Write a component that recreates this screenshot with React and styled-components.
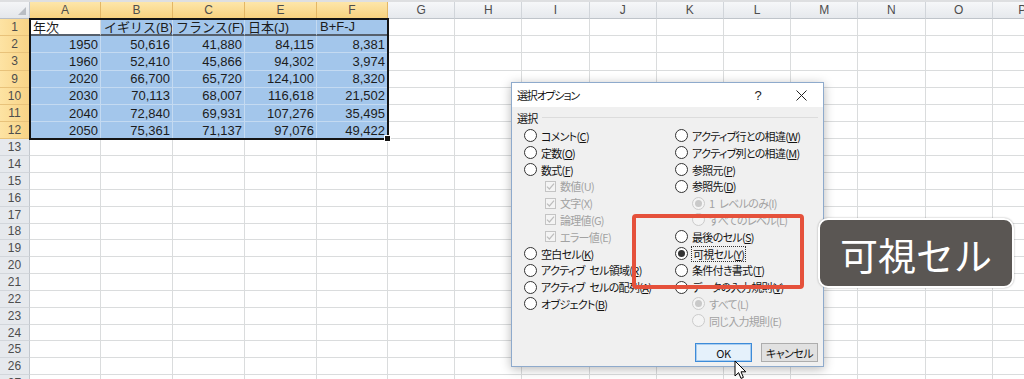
import React from "react";
import styled, { createGlobalStyle } from "styled-components";

const GlobalStyle = createGlobalStyle`
  html, body { margin: 0; padding: 0; background: #fff; }
  body { overflow: hidden; }
`;

const Page = styled.div`
  position: relative;
  width: 1024px;
  height: 379px;
  overflow: hidden;
  background: #fff;
  font-family: "Liberation Sans", "Noto Sans CJK JP", sans-serif;
`;

const Sheet = styled.div`
  position: relative;
  display: grid;
  grid-template-columns: 30px 71px 72px 72px 72px 71px repeat(9, 67.2px) 60px;
  grid-template-rows: 17px repeat(7, 17.2px) repeat(15, 16.85px);
  border-top: 2px solid #dedfe1;
`;

const Corner = styled.div`
  position: relative;
  box-sizing: border-box;
  background: linear-gradient(#f4f5f7, #e4e7eb);
  border-right: 1px solid #c5cad0;
  border-bottom: 1px solid #b9bec5;
  &::after {
    content: "";
    position: absolute;
    right: 3px;
    bottom: 3px;
    border-style: solid;
    border-width: 0 0 8px 8px;
    border-color: transparent transparent #b9bdc3 transparent;
  }
`;

const ColHeader = styled.div`
  box-sizing: border-box;
  display: flex;
  align-items: center;
  justify-content: center;
  font-size: 12px;
  color: #4d4d4d;
  background: ${(p) =>
    p.$active ? "linear-gradient(#fde6aa, #f8d27f)" : "linear-gradient(#f6f7f9, #e6e9ed)"};
  border-right: 1px solid ${(p) => (p.$active ? "#e3b766" : "#d1d5da")};
  border-bottom: 1px solid ${(p) => (p.$active ? "#eaa83a" : "#bfc4ca")};
`;

const RowHeader = styled.div`
  box-sizing: border-box;
  display: flex;
  align-items: center;
  justify-content: center;
  font-size: 12px;
  color: #4d4d4d;
  background: ${(p) => (p.$active ? "linear-gradient(90deg, #fde3a3, #f8d386)" : "#e6e9ed")};
  border-right: 1px solid ${(p) => (p.$active ? "#eaa83a" : "#c3c8ce")};
  border-bottom: 1px solid ${(p) => (p.$active ? "#e8c27a" : "#d2d6db")};
`;

const Cell = styled.div`
  box-sizing: border-box;
  display: flex;
  align-items: center;
  justify-content: ${(p) => (p.$num ? "flex-end" : "flex-start")};
  padding: 0 2px 0 3px;
  font-size: 13px;
  color: #1c1c1c;
  white-space: nowrap;
  overflow: hidden;
  background: ${(p) => (p.$sel ? "#a3c6eb" : "#fff")};
  border-right: 1px solid ${(p) => (p.$sel ? "#c4daf1" : "#dadcdd")};
  border-bottom: ${(p) =>
    p.$thick ? "2px solid #56606c" : `1px solid ${p.$sel ? "#c4daf1" : "#dadcdd"}`};
`;

/* absolutely positioned inside its grid area: the selection outline lies over the cells */
const SelectionFrame = styled.div`
  position: absolute;
  grid-column: 2 / 7;
  grid-row: 2 / 9;
  inset: -1px -1px -1px -1px;
  border: 2px solid #141414;
  z-index: 1;
  pointer-events: none;
`;

const FillHandle = styled.span`
  position: absolute;
  right: -4px;
  bottom: -4px;
  width: 5px;
  height: 5px;
  background: #141414;
  border: 1px solid #fff;
`;

/* ---------- dialog ---------- */

const Dialog = styled.div`
  position: absolute;
  left: 511px;
  top: 82px;
  width: 313px;
  height: 285px;
  box-sizing: border-box;
  border: 1px solid #8eaacc;
  background: #f0f0f0;
  box-shadow: 0 2px 10px rgba(0, 0, 0, 0.28);
  display: flex;
  flex-direction: column;
  font-family: "Noto Sans CJK JP", sans-serif;
  font-feature-settings: "palt";
  font-size: 11px;
  letter-spacing: -0.7px;
  color: #141414;
  z-index: 5;
`;

const TitleBar = styled.div`
  flex: none;
  height: 24px;
  background: #fff;
  display: flex;
  align-items: center;
  padding-left: 5px;
`;

const Title = styled.span`
  flex: 1;
  font-size: 11px;
  letter-spacing: -1.2px;
`;

const TitleButton = styled.div`
  width: ${(p) => p.$w}px;
  height: 24px;
  display: flex;
  align-items: center;
  justify-content: center;
  font-family: "Liberation Sans", sans-serif;
  font-size: 13px;
  letter-spacing: 0;
  color: #222;
`;

const Body = styled.div`
  flex: 1;
  display: flex;
  flex-direction: column;
  padding: 2px 5px 4px 5px;
`;

const GroupHeader = styled.div`
  height: 17px;
  display: flex;
  align-items: center;
  gap: 4px;
`;

const GroupLine = styled.div`
  flex: 1;
  height: 1px;
  background: #dcdcdc;
`;

const Options = styled.div`
  display: grid;
  grid-template-columns: 151px 1fr;
  padding-left: 7px;
  margin-top: 1.6px;
`;

const Column = styled.div`
  display: flex;
  flex-direction: column;
`;

const Option = styled.div`
  height: 16.8px;
  display: flex;
  align-items: center;
  gap: 4px;
  padding-left: ${(p) => p.$indent || 0}px;
  color: ${(p) => (p.$disabled ? "#a2a2a2" : "#141414")};
  white-space: nowrap;
`;

const Radio = styled.span`
  flex: none;
  width: 13px;
  height: 13px;
  box-sizing: border-box;
  border-radius: 50%;
  border: 1px solid ${(p) => (p.$disabled ? "#cbcbcb" : "#333")};
  background: ${(p) => (p.$disabled ? "#f4f4f4" : "#fff")};
  display: flex;
  align-items: center;
  justify-content: center;
  &::after {
    content: "";
    width: 7px;
    height: 7px;
    border-radius: 50%;
    background: ${(p) => (p.$disabled ? "#c9c9c9" : "#333")};
    display: ${(p) => (p.$checked ? "block" : "none")};
  }
`;

const Check = styled.span`
  flex: none;
  width: 11px;
  height: 11px;
  box-sizing: border-box;
  border: 1px solid #c4c4c4;
  background: #f4f4f4;
  display: flex;
  align-items: center;
  justify-content: center;
`;

const Label = styled.span`
  outline: ${(p) => (p.$focus ? "1px dotted #333" : "none")};
  padding: ${(p) => (p.$focus ? "0 1px" : "0")};
  line-height: 14px;
`;

const Key = styled.span`
  text-decoration: ${(p) => (p.$disabled ? "none" : "underline")};
  text-underline-offset: 1px;
`;

const Footer = styled.div`
  margin-top: auto;
  display: flex;
  justify-content: flex-end;
  gap: 9px;
`;

const Button = styled.button`
  width: 57px;
  height: 19px;
  box-sizing: border-box;
  padding: 0;
  font-family: "Noto Sans CJK JP", sans-serif;
  font-feature-settings: "palt";
  font-size: 11px;
  letter-spacing: -0.5px;
  color: #141414;
  background: ${(p) => (p.$primary ? "#e5f1fb" : "#e1e1e1")};
  border: 1px solid ${(p) => (p.$primary ? "#3d8bd8" : "#adadad")};
  box-shadow: ${(p) => (p.$primary ? "inset 0 0 0 1px #a9cdf0" : "none")};
`;

/* ---------- overlays ---------- */

const Highlight = styled.div`
  position: absolute;
  left: 632px;
  top: 214px;
  width: 172px;
  height: 75px;
  box-sizing: border-box;
  border: 4px solid #e5513b;
  border-radius: 4px;
  z-index: 6;
`;

const Caption = styled.div`
  position: absolute;
  left: 818px;
  top: 218px;
  width: 196px;
  height: 70px;
  box-sizing: border-box;
  border: 2px solid #fff;
  border-radius: 10px;
  background: #5a5653;
  color: #fff;
  font-family: "Noto Sans CJK JP", sans-serif;
  font-size: 38px;
  display: flex;
  align-items: center;
  justify-content: center;
  box-shadow: 0 0 2px rgba(0, 0, 0, 0.35);
  z-index: 6;
`;

const Cursor = styled.svg`
  position: absolute;
  left: 734px;
  top: 360px;
  z-index: 7;
`;

/* ---------- data ---------- */

const columns = ["A", "B", "C", "E", "F", "G", "H", "I", "J", "K", "L", "M", "N", "O", "P"];

const tableRows = [
  { n: 1, cells: ["年次", "イギリス(B)", "フランス(F)", "日本(J)", "B+F-J"] },
  { n: 2, cells: ["1950", "50,616", "41,880", "84,115", "8,381"] },
  { n: 3, cells: ["1960", "52,410", "45,866", "94,302", "3,974"] },
  { n: 9, cells: ["2020", "66,700", "65,720", "124,100", "8,320"] },
  { n: 10, cells: ["2030", "70,113", "68,007", "116,618", "21,502"] },
  { n: 11, cells: ["2040", "72,840", "69,931", "107,276", "35,495"] },
  { n: 12, cells: ["2050", "75,361", "71,137", "97,076", "49,422"] },
];
const emptyRows = Array.from({ length: 15 }, (_, i) => 13 + i);

const leftOptions = [
  { type: "radio", t: "コメント", k: "C" },
  { type: "radio", t: "定数", k: "O" },
  { type: "radio", t: "数式", k: "F" },
  { type: "check", t: "数値", k: "U", disabled: true },
  { type: "check", t: "文字", k: "X", disabled: true },
  { type: "check", t: "論理値", k: "G", disabled: true },
  { type: "check", t: "エラー値", k: "E", disabled: true },
  { type: "radio", t: "空白セル", k: "K" },
  { type: "radio", t: "アクティブ\u2002セル領域", k: "R" },
  { type: "radio", t: "アクティブ\u2002セルの配列", k: "A" },
  { type: "radio", t: "オブジェクト", k: "B" },
];

const rightOptions = [
  { type: "radio", t: "アクティブ行との相違", k: "W" },
  { type: "radio", t: "アクティブ列との相違", k: "M" },
  { type: "radio", t: "参照元", k: "P" },
  { type: "radio", t: "参照先", k: "D" },
  { type: "radio", t: "1\u2002レベルのみ", k: "I", disabled: true, sub: true, checked: true },
  { type: "radio", t: "すべてのレベル", k: "L", disabled: true, sub: true },
  { type: "radio", t: "最後のセル", k: "S" },
  { type: "radio", t: "可視セル", k: "Y", checked: true, focus: true },
  { type: "radio", t: "条件付き書式", k: "T" },
  { type: "radio", t: "データの入力規則", k: "V" },
  { type: "radio", t: "すべて", k: "L", disabled: true, sub: true, checked: true },
  { type: "radio", t: "同じ入力規則", k: "E", disabled: true, sub: true },
];

function OptionRow({ o }) {
  const indent = o.type === "check" ? 21 : o.sub ? 17 : 0;
  return (
    <Option $disabled={o.disabled} $indent={indent}>
      {o.type === "check" ? (
        <Check>
          <svg width="9" height="9" viewBox="0 0 9 9">
            <path d="M1 4.6 L3.4 7 L8 1.6" fill="none" stroke="#bdbdbd" strokeWidth="1.2" />
          </svg>
        </Check>
      ) : (
        <Radio $disabled={o.disabled} $checked={o.checked} />
      )}
      <Label $focus={o.focus}>
        {o.t}(<Key $disabled={o.disabled}>{o.k}</Key>)
      </Label>
    </Option>
  );
}

export default function App() {
  return (
    <Page>
      <GlobalStyle />
      <Sheet>
        <Corner />
        {columns.map((c, i) => (
          <ColHeader key={c} $active={i < 5}>
            {c}
          </ColHeader>
        ))}
        {tableRows.map((r) => (
          <React.Fragment key={r.n}>
            <RowHeader $active>{r.n}</RowHeader>
            {columns.map((c, i) => {
              if (i < 5) {
                const isFirst = r.n === 1;
                return (
                  <Cell
                    key={c}
                    $sel={!(isFirst && i === 0)}
                    $num={!isFirst}
                    $thick={isFirst}
                  >
                    {r.cells[i]}
                  </Cell>
                );
              }
              return <Cell key={c} />;
            })}
          </React.Fragment>
        ))}
        {emptyRows.map((n) => (
          <React.Fragment key={n}>
            <RowHeader>{n}</RowHeader>
            {columns.map((c) => (
              <Cell key={c} />
            ))}
          </React.Fragment>
        ))}
        <SelectionFrame>
          <FillHandle />
        </SelectionFrame>
      </Sheet>

      <Dialog>
        <TitleBar>
          <Title>選択オプション</Title>
          <TitleButton $w={42}>?</TitleButton>
          <TitleButton $w={44}>
            <svg width="11" height="11" viewBox="0 0 11 11">
              <path d="M0.5 0.5 L10.5 10.5 M10.5 0.5 L0.5 10.5" stroke="#222" strokeWidth="1" />
            </svg>
          </TitleButton>
        </TitleBar>
        <Body>
          <GroupHeader>
            <span>選択</span>
            <GroupLine />
          </GroupHeader>
          <Options>
            <Column>
              {leftOptions.map((o, i) => (
                <OptionRow key={i} o={o} />
              ))}
            </Column>
            <Column>
              {rightOptions.map((o, i) => (
                <OptionRow key={i} o={o} />
              ))}
            </Column>
          </Options>
          <Footer>
            <Button $primary>OK</Button>
            <Button>キャンセル</Button>
          </Footer>
        </Body>
      </Dialog>

      <Highlight />
      <Caption>可視セル</Caption>

      <Cursor width="13" height="20" viewBox="0 0 13 20">
        <path
          d="M1 1 L1 16 L4.6 12.6 L7 18.4 L9.4 17.4 L7 11.8 L11.8 11.8 Z"
          fill="#fff"
          stroke="#000"
          strokeWidth="1"
          strokeLinejoin="round"
        />
      </Cursor>
    </Page>
  );
}
